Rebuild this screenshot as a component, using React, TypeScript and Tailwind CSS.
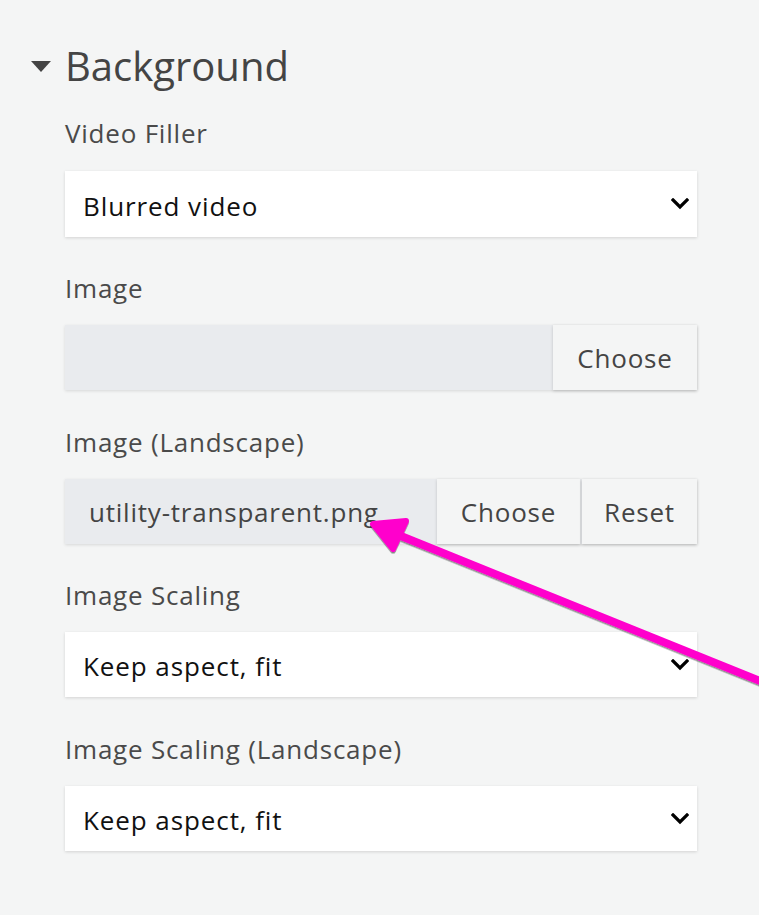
import React from "react"

function Chevron() {
  return (
    <svg width="18" height="12" viewBox="0 0 18 12" className="shrink-0">
      <polyline points="2,2 9,9 16,2" fill="none" stroke="#000" strokeWidth="3.2" strokeLinecap="square" />
    </svg>
  )
}

function Label({ children, className = "" }: { children: React.ReactNode; className?: string }) {
  return <div className={`h-[36px] text-[26px] leading-[36px] tracking-[0.03em] text-[#4a4a4a] ${className}`}>{children}</div>
}

function Select({ value, className = "" }: { value: string; className?: string }) {
  return (
    <div className={`flex h-[65px] items-center justify-between bg-white pl-[18px] pr-[8px] shadow-[0_1px_3px_rgba(0,0,0,0.14)] ${className}`}>
      <span className="pt-[4px] text-[26px] tracking-[0.035em] text-[#111]">{value}</span>
      <Chevron />
    </div>
  )
}

function Button({ children, className = "" }: { children: React.ReactNode; className?: string }) {
  return (
    <div className={`flex h-full items-center justify-center bg-[#f4f5f5] pt-[1px] text-[26px] tracking-[0.03em] text-[#444] shadow-[0_1px_3px_rgba(0,0,0,0.18)] ${className}`}>
      {children}
    </div>
  )
}

export default function App() {
  return (
    <div className="relative min-h-[915px] w-[759px] overflow-hidden bg-[#f4f5f5] pl-[31px] pr-[62px] pt-[41px]" style={{ fontFamily: '"Open Sans", sans-serif' }}>
      <div className="flex h-[50px] items-center gap-[14px]">
        <svg width="20" height="11" viewBox="0 0 20 11">
          <polygon points="0,0 20,0 10,11" fill="#444" />
        </svg>
        <h2 className="text-[40px] leading-[50px] text-[#444]">Background</h2>
      </div>

      <div className="ml-[34px] flex flex-col">
        <Label className="mt-[24px]">Video Filler</Label>
        <Select value="Blurred video" className="mt-[20px] h-[66px]" />

        <Label className="mt-[33px]">Image</Label>
        <div className="mt-[19px] flex h-[65px] bg-[#e9ebee] shadow-[0_1px_3px_rgba(0,0,0,0.12)]">
          <div className="flex-1" />
          <Button className="w-[144px]">Choose</Button>
        </div>

        <Label className="mt-[34px]">Image (Landscape)</Label>
        <div className="mt-[19px] flex h-[65px] gap-[2px] bg-[#e9ebee] shadow-[0_1px_3px_rgba(0,0,0,0.12)]">
          <div className="flex flex-1 items-center pl-[24px] pt-[1px] text-[26px] tracking-[0.03em] text-[#444]">utility-transparent.png</div>
          <Button className="w-[143px]">Choose</Button>
          <Button className="w-[115px]">Reset</Button>
        </div>

        <Label className="mt-[33px]">Image Scaling</Label>
        <Select value="Keep aspect, fit" className="mt-[19px]" />

        <Label className="mt-[34px]">Image Scaling (Landscape)</Label>
        <Select value="Keep aspect, fit" className="mt-[19px]" />
      </div>

      {/* annotation arrow drawn over the screenshot */}
      <svg className="pointer-events-none absolute left-0 top-0" width="759" height="915" viewBox="0 0 759 915">
        <defs>
          <filter id="sh" x="-10%" y="-10%" width="120%" height="120%">
            <feDropShadow dx="0" dy="1.5" stdDeviation="0.6" floodColor="#000" floodOpacity="0.45" />
          </filter>
        </defs>
        <g filter="url(#sh)" fill="#ff00cc" stroke="#ff00cc" strokeLinejoin="round" strokeLinecap="round">
          <line x1="396" y1="534" x2="775" y2="687" strokeWidth="8" strokeLinecap="butt" />
          <polygon points="373,524 406,521 393,549" strokeWidth="6" />
        </g>
      </svg>
    </div>
  )
}
